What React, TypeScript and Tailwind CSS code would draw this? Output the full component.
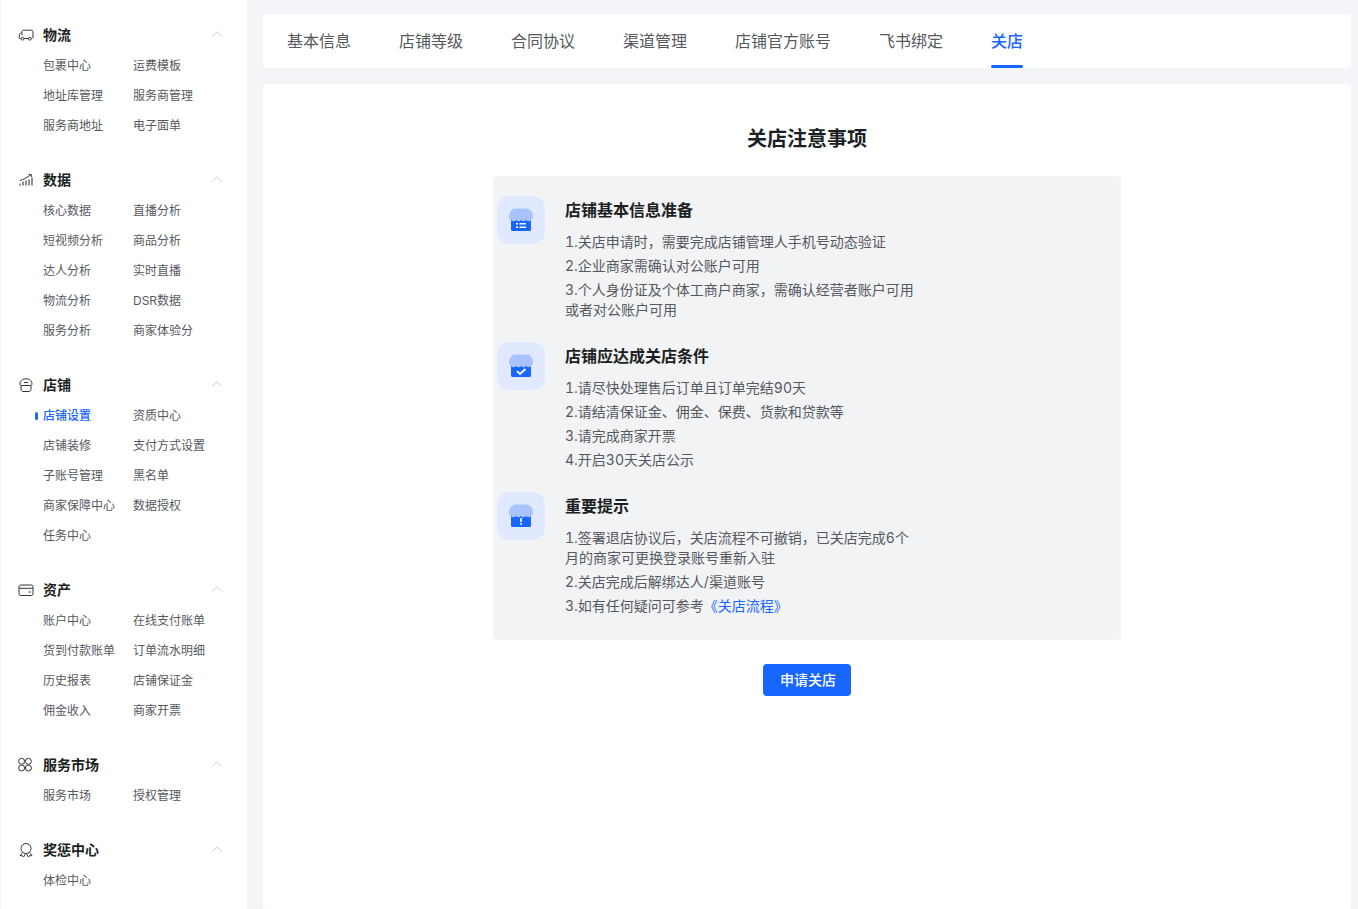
import { ChevronUp } from "lucide-react";
import type { ReactNode } from "react";

const iconProps = {
    width: 16,
    height: 16,
    viewBox: "0 0 16 16",
    fill: "none",
    stroke: "#33363d",
    strokeWidth: 1,
};

const TruckIcon = () => (
    <svg {...iconProps}>
        <path d="M3 11.5H2.2C1.5 11.5 1 11 1.1 10.3L1.6 7.2C1.7 6.8 2 6.6 2.4 6.4L3.6 5.9L4.1 4.2C4.3 3.6 4.8 3.2 5.4 3.2H13.5C14.3 3.2 15 3.9 15 4.7V10C15 10.8 14.3 11.5 13.5 11.5H13" />
        <path d="M6 11.5H10.5" />
        <circle cx="4.5" cy="11.7" r="1.4" />
        <circle cx="11.8" cy="11.7" r="1.4" />
        <path d="M4 5.9V8.5" />
    </svg>
);

const ChartIcon = () => (
    <svg {...iconProps}>
        <path d="M2 13.5V11.5M5 13.5V9.5M8 13.5V8.5M11 13.5V7.5M14 13.5V5.5" strokeWidth="1.1" />
        <path d="M2 8.5C5.5 7.5 9 5.5 12.5 3" />
        <path d="M10.5 2.6H13.4V5" />
    </svg>
);

const ShopIcon = () => (
    <svg {...iconProps}>
        <path d="M3 8.5V12.5C3 13.6 3.9 14.5 5 14.5H11C12.1 14.5 13 13.6 13 12.5V8.5" />
        <path d="M2 7C2 3.6 4.5 1.8 8 1.8C11.5 1.8 14 3.6 14 7C14 8 13.2 8.5 12.3 8.5H3.7C2.8 8.5 2 8 2 7Z" />
        <path d="M6 5.5H10" />
    </svg>
);

const CardIcon = () => (
    <svg {...iconProps}>
        <rect x="1" y="3" width="14" height="10.5" rx="1.8" />
        <path d="M1 6.3H15" />
        <path d="M10.5 10H12.8" />
    </svg>
);

const GridIcon = () => (
    <svg {...iconProps}>
        <circle cx="3.6" cy="4.3" r="3" />
        <circle cx="10.4" cy="4.3" r="3" />
        <circle cx="3.6" cy="11" r="3" />
        <circle cx="10.4" cy="11" r="3" />
    </svg>
);

const AwardIcon = () => (
    <svg {...iconProps}>
        <circle cx="8" cy="6.5" r="5" />
        <path d="M4.5 10.5L2 13.6L4.6 13.8L5.6 15L7.3 12" />
        <path d="M11.5 10.5L14 13.6L11.4 13.8L10.4 15L8.7 12" />
    </svg>
);

const menu: { title: string; icon: ReactNode; items: string[] }[] = [
    { title: "物流", icon: <TruckIcon />, items: ["包裹中心", "运费模板", "地址库管理", "服务商管理", "服务商地址", "电子面单"] },
    {
        title: "数据",
        icon: <ChartIcon />,
        items: ["核心数据", "直播分析", "短视频分析", "商品分析", "达人分析", "实时直播", "物流分析", "DSR数据", "服务分析", "商家体验分"],
    },
    {
        title: "店铺",
        icon: <ShopIcon />,
        items: ["店铺设置", "资质中心", "店铺装修", "支付方式设置", "子账号管理", "黑名单", "商家保障中心", "数据授权", "任务中心"],
    },
    {
        title: "资产",
        icon: <CardIcon />,
        items: ["账户中心", "在线支付账单", "货到付款账单", "订单流水明细", "历史报表", "店铺保证金", "佣金收入", "商家开票"],
    },
    { title: "服务市场", icon: <GridIcon />, items: ["服务市场", "授权管理"] },
    { title: "奖惩中心", icon: <AwardIcon />, items: ["体检中心"] },
];

const tabs = ["基本信息", "店铺等级", "合同协议", "渠道管理", "店铺官方账号", "飞书绑定", "关店"];

function StoreBadge({ glyph }: { glyph: ReactNode }) {
    return (
        <div className="flex h-12 w-12 shrink-0 items-center justify-center rounded-xl bg-[#e0e9ff]">
            <svg width="24" height="24" viewBox="0 0 24 24">
                <rect x="2" y="10" width="20" height="13" rx="1.5" fill="#1966ff" />
                <path d="M6 0.5H18C20.5 0.5 24 4 24 8C24 10 23.5 11.5 22 11.5H2C0.5 11.5 0 10 0 8C0 4 3.5 0.5 6 0.5Z" fill="#a9c3ff" />
                <circle cx="4.5" cy="10.8" r="2.5" fill="#a9c3ff" />
                <circle cx="9.5" cy="10.8" r="2.5" fill="#a9c3ff" />
                <circle cx="14.5" cy="10.8" r="2.5" fill="#a9c3ff" />
                <circle cx="19.5" cy="10.8" r="2.5" fill="#a9c3ff" />
                {glyph}
            </svg>
        </div>
    );
}

const ListGlyph = (
    <g fill="#fff">
        <rect x="7" y="15" width="2" height="1.5" />
        <rect x="10.5" y="15" width="6.5" height="1.5" />
        <rect x="7" y="18.5" width="2" height="1.5" />
        <rect x="10.5" y="18.5" width="6.5" height="1.5" />
    </g>
);

const CheckGlyph = <path d="M8 17.2L11 20L16.5 15" fill="none" stroke="#fff" strokeWidth="1.8" />;

const AlertGlyph = (
    <g fill="#fff">
        <rect x="11.2" y="14" width="1.7" height="4" />
        <rect x="11.2" y="19" width="1.7" height="1.7" />
    </g>
);

function Notice({ glyph, title, children }: { glyph: ReactNode; title: string; children: ReactNode }) {
    return (
        <div className="flex gap-5">
            <StoreBadge glyph={glyph} />
            <div className="w-[352px]">
                <h3 className="h-6 text-base leading-[28px] font-semibold text-[#1c1f23]">{title}</h3>
                <div className="mt-3 flex flex-col gap-1 text-sm leading-5 text-[#565960] tabular-nums">{children}</div>
            </div>
        </div>
    );
}

export default function App() {
    return (
        <div
            lang="zh-CN"
            className="flex h-[909px] overflow-hidden bg-[#f4f5f9] font-['Inter','Noto_Sans_CJK_SC',sans-serif]"
        >
            {/* Sidebar */}
            <aside className="ml-px flex w-[246px] shrink-0 flex-col gap-[22px] bg-white pt-[18px]">
                {menu.map((group) => (
                    <div key={group.title}>
                        <div className="flex h-[33px] items-center pr-[21px] pl-[17px]">
                            <span className="w-[25px]">{group.icon}</span>
                            <span className="flex-1 text-sm font-semibold text-[#1c1f23]">{group.title}</span>
                            <ChevronUp className="mb-[2px] h-[18px] w-[18px] text-[#b9bcc2]" strokeWidth={1} />
                        </div>
                        <div className="grid w-[200px] grid-cols-[90px_110px] pl-[42px] box-content">
                            {group.items.map((item) => {
                                const active = item === "店铺设置";
                                return (
                                    <div
                                        key={item}
                                        className={`relative flex h-[30px] items-center text-xs whitespace-nowrap ${active ? "font-medium text-[#1966ff]" : "text-[#565960]"}`}
                                    >
                                        {active && (
                                            <span className="absolute top-[11px] -left-2 h-2 w-[3px] rounded-full bg-[#1966ff]" />
                                        )}
                                        {item}
                                    </div>
                                );
                            })}
                        </div>
                    </div>
                ))}
            </aside>

            {/* Main */}
            <main className="ml-4 flex w-[1088px] shrink-0 flex-col gap-4 pt-[14px]">
                <nav className="flex h-[54px] gap-12 rounded bg-white px-6">
                    {tabs.map((tab) => {
                        const active = tab === "关店";
                        return (
                            <div
                                key={tab}
                                className={`relative flex items-center pb-[1px] text-base ${active ? "font-medium text-[#1966ff]" : "text-[#565960]"}`}
                            >
                                {tab}
                                {active && <span className="absolute inset-x-0 bottom-0 h-[3px] rounded-sm bg-[#1966ff]" />}
                            </div>
                        );
                    })}
                </nav>

                <section className="flex flex-1 flex-col items-center rounded bg-white pt-[41px]">
                    <h2 className="text-xl leading-7 font-semibold text-[#1c1f23]">关店注意事项</h2>
                    <div className="mt-[23px] flex h-[464px] w-[628px] flex-col gap-[22px] rounded bg-[#f2f3f5] pt-5 pl-1">
                        <Notice glyph={ListGlyph} title="店铺基本信息准备">
                            <p>1.关店申请时，需要完成店铺管理人手机号动态验证</p>
                            <p>2.企业商家需确认对公账户可用</p>
                            <p>3.个人身份证及个体工商户商家，需确认经营者账户可用或者对公账户可用</p>
                        </Notice>
                        <Notice glyph={CheckGlyph} title="店铺应达成关店条件">
                            <p>1.请尽快处理售后订单且订单完结90天</p>
                            <p>2.请结清保证金、佣金、保费、货款和贷款等</p>
                            <p>3.请完成商家开票</p>
                            <p>4.开启30天关店公示</p>
                        </Notice>
                        <Notice glyph={AlertGlyph} title="重要提示">
                            <p>1.签署退店协议后，关店流程不可撤销，已关店完成6个月的商家可更换登录账号重新入驻</p>
                            <p>2.关店完成后解绑达人/渠道账号</p>
                            <p>
                                3.如有任何疑问可参考<span className="text-[#1966ff]">《关店流程》</span>
                            </p>
                        </Notice>
                    </div>
                    <button className="mt-6 h-8 w-[88px] rounded bg-[#1966ff] pl-[2px] text-sm font-medium text-white">申请关店</button>
                </section>
            </main>
        </div>
    );
}
